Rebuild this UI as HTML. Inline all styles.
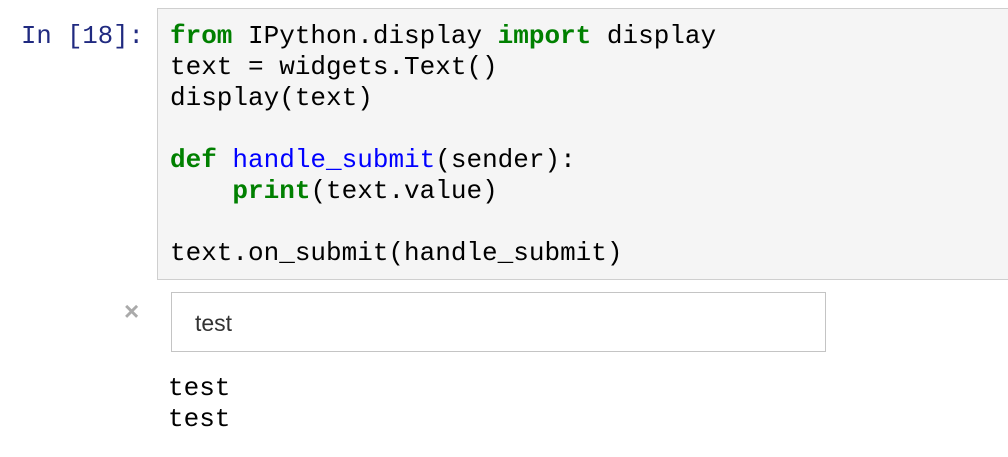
<!DOCTYPE html>
<html><head><style>
body{margin:0;background:#fff;width:1008px;height:457px;position:relative;overflow:hidden;font-family:"Liberation Mono",monospace;}
.prompt{position:absolute;left:21px;top:21px;font-size:25.6px;line-height:31px;color:#202a80;white-space:pre;}
.code{position:absolute;left:157px;top:8px;width:860px;height:272px;background:#f5f5f5;border:1px solid #cfcfcf;box-sizing:border-box;}
pre{margin:0;position:absolute;left:12px;top:12px;font-family:"Liberation Mono",monospace;font-size:26px;line-height:31px;color:#000;}
.k{color:#008000;font-weight:bold}.f{color:#0000ff}
.x{position:absolute;left:124px;top:296px;font-family:"Liberation Sans",sans-serif;font-size:26px;color:#aaa;font-weight:bold}
.inp{position:absolute;left:171px;top:292px;width:655px;height:60px;border:1px solid #c4c4c4;box-sizing:border-box;font-family:"Liberation Sans",sans-serif;font-size:23px;color:#333;padding:17px 0 0 23px;}
.out{position:absolute;left:168px;top:373px;font-size:26px;line-height:31px;white-space:pre;margin:0;}
</style></head><body>
<div class="prompt">In [18]:</div>
<div class="code"><pre><span class="k">from</span> IPython.display <span class="k">import</span> display
text = widgets.Text()
display(text)

<span class="k">def</span> <span class="f">handle_submit</span>(sender):
    <span class="k">print</span>(text.value)

text.on_submit(handle_submit)</pre></div>
<div class="x">×</div>
<div class="inp">test</div>
<pre class="out" style="position:absolute">test
test</pre>
</body></html>
